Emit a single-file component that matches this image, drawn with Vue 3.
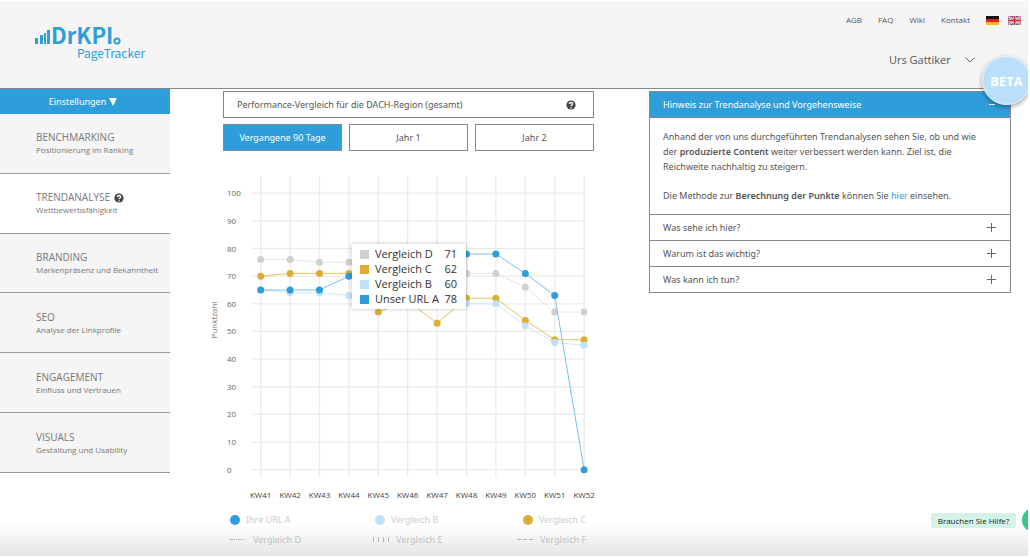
<script setup>
import { ref } from 'vue'

const metaLinks = ['AGB', 'FAQ', 'Wiki', 'Kontakt']

const navItems = [
  { title: 'BENCHMARKING', sub: 'Positionierung im Ranking' },
  { title: 'TRENDANALYSE', sub: 'Wettbewerbsfähigkeit', active: true },
  { title: 'BRANDING', sub: 'Markenpräsenz und Bekanntheit' },
  { title: 'SEO', sub: 'Analyse der Linkprofile' },
  { title: 'ENGAGEMENT', sub: 'Einfluss und Vertrauen' },
  { title: 'VISUALS', sub: 'Gestaltung und Usability' }
]

const ranges = ['Vergangene 90 Tage', 'Jahr 1', 'Jahr 2']
const activeRange = ref(0)

const questions = ['Was sehe ich hier?', 'Warum ist das wichtig?', 'Was kann ich tun?']

const weeks = Array.from({ length: 12 }, (_, i) => 'KW' + (41 + i))
const ticks = Array.from({ length: 11 }, (_, i) => i * 10)
const px = (i) => 37.7 + i * 29.4
const py = (v) => 304.7 - v * 2.765

const series = [
  { key: 'd', values: [76, 76, 75, 75, 74, 73, 72, 71, 71, 66, 57, 57] },
  { key: 'c', values: [70, 71, 71, 71, 57, 61, 53, 62, 62, 54, 47, 47] },
  { key: 'b', values: [65, 64, 64, 63, 62, 61, 60, 60, 60, 52, 46, 45] },
  { key: 'a', values: [65, 65, 65, 70, 72, 74, 76, 78, 78, 71, 63, 0] }
].map((s) => ({ ...s, path: s.values.map((v, i) => px(i) + ',' + py(v)).join(' ') }))

const tooltip = [
  { key: 'd', name: 'Vergleich D', value: 71 },
  { key: 'c', name: 'Vergleich C', value: 62 },
  { key: 'b', name: 'Vergleich B', value: 60 },
  { key: 'a', name: 'Unser URL A', value: 78 }
]
</script>

<template>
  <div class="page">
    <header class="header">
      <a class="logo" href="#" aria-label="DrKPI PageTracker">
        <span class="logo-top">
          <svg class="bars" viewBox="0 0 16 14" aria-hidden="true">
            <path d="M0 8h3v6H0zM5 5h3v9H5zM9 3h2v11H9zM12 0h3v14h-3z" />
          </svg>
          <span class="brand">DrKPI</span>
          <svg class="ring" viewBox="0 0 8 8" aria-hidden="true"><circle cx="4" cy="4" r="2.6" /></svg>
        </span>
        <span class="product">PageTracker</span>
      </a>
      <div class="header-right">
        <nav class="meta">
          <a v-for="l in metaLinks" :key="l" href="#">{{ l }}</a>
          <a class="flag de" href="#" aria-label="Deutsch">
            <svg viewBox="0 0 13 9"><path fill="#111" d="M0 0h13v3H0z" /><path fill="#d8222a" d="M0 3h13v3H0z" /><path fill="#f3b91f" d="M0 6h13v3H0z" /></svg>
          </a>
          <a class="flag" href="#" aria-label="English">
            <svg viewBox="0 0 13 9">
              <path fill="#35497f" d="M0 0h13v9H0z" />
              <path stroke="#fff" stroke-width="2" d="M0 0l13 9M13 0L0 9" />
              <path stroke="#d0303c" stroke-width=".8" d="M0 0l13 9M13 0L0 9" />
              <path stroke="#fff" stroke-width="3.4" d="M6.500 0v9M0 4.500h13" />
              <path stroke="#d0303c" stroke-width="2" d="M6.500 0v9M0 4.500h13" />
            </svg>
          </a>
        </nav>
        <button class="user" type="button">
          Urs Gattiker
          <svg class="chevron" viewBox="0 0 10 6" aria-hidden="true"><path d="M.5.5L5 5l4.500-4.500" /></svg>
        </button>
      </div>
      <span class="beta">BETA</span>
    </header>

    <div class="body">
      <aside class="sidebar">
        <button class="settings" type="button">
          Einstellungen
          <svg viewBox="0 0 8 8" aria-hidden="true"><path d="M0 0h8L4 8z" /></svg>
        </button>
        <nav class="nav">
          <a v-for="n in navItems" :key="n.title" href="#" class="nav-item" :class="{ active: n.active }">
            <span class="nav-title">
              {{ n.title }}
              <svg v-if="n.active" class="help" viewBox="0 0 10 10" aria-hidden="true">
                <circle cx="5" cy="5" r="4.6" /><path d="M3.400 4C3.400 2 6.700 2 6.700 4 6.700 5.100 5 5 5 6.300M5 7.200v1.200" />
              </svg>
            </span>
            <span class="nav-sub">{{ n.sub }}</span>
          </a>
        </nav>
      </aside>

      <main class="content">
        <section class="trend">
          <h1 class="box-title">
            Performance-Vergleich für die DACH-Region (gesamt)
            <svg class="help" viewBox="0 0 10 10" aria-hidden="true">
              <circle cx="5" cy="5" r="4.6" /><path d="M3.400 4C3.400 2 6.700 2 6.700 4 6.700 5.100 5 5 5 6.300M5 7.200v1.200" />
            </svg>
          </h1>
          <div class="ranges">
            <button v-for="(r, i) in ranges" :key="r" type="button" :class="{ on: i === activeRange }" @click="activeRange = i">{{ r }}</button>
          </div>
          <div class="chart">
            <svg class="plot" viewBox="0 0 371 338" role="img" aria-label="Punktzahl pro Kalenderwoche">
              <g class="grid">
                <path v-for="(w, i) in weeks" :key="w" :d="`M${px(i)} 11V312`" />
                <path v-for="t in ticks" :key="t" :d="`M29 ${py(t)}H361`" />
              </g>
              <g class="axis">
                <text v-for="t in ticks" :key="t" x="4" :y="py(t) + 3">{{ t }}</text>
              </g>
              <text class="axis-name" text-anchor="middle" transform="translate(-6 155) rotate(-90)">Punktzahl</text>
              <g class="weeks">
                <text v-for="(w, i) in weeks" :key="w" :x="px(i)" y="333" text-anchor="middle">{{ w }}</text>
              </g>
              <g v-for="s in series" :key="s.key" :class="'s-' + s.key">
                <polyline :points="s.path" />
                <circle v-for="(v, i) in s.values" :key="i" :cx="px(i)" :cy="py(v)" r="3.5" />
              </g>
            </svg>
            <table class="tooltip">
              <tbody>
                <tr v-for="t in tooltip" :key="t.key">
                  <th scope="row"><i :class="'bg-' + t.key"></i>{{ t.name }}</th>
                  <td>{{ t.value }}</td>
                </tr>
              </tbody>
            </table>
          </div>
          <ul class="legend">
            <li><i class="dot bg-a"></i>Ihre URL A</li>
            <li><i class="dot bg-b"></i>Vergleich B</li>
            <li><i class="dot bg-c"></i>Vergleich C</li>
          </ul>
          <ul class="legend dashed">
            <li><svg class="dash" viewBox="0 0 16 5"><path stroke-dasharray="3 1 1 1 1 1" d="M0 2.500h16" /></svg>Vergleich D</li>
            <li><svg class="dash" viewBox="0 0 16 5"><path stroke-width="5" stroke-dasharray="1 4" d="M0 2.500h16" /></svg>Vergleich E</li>
            <li><svg class="dash" viewBox="0 0 16 5"><path stroke-dasharray="4 2" d="M0 2.500h16" /></svg>Vergleich F</li>
          </ul>
        </section>

        <section class="info">
          <button class="info-head" type="button" aria-expanded="true">Hinweis zur Trendanalyse und Vorgehensweise<span class="minus"></span></button>
          <div class="info-text">
            <p>Anhand der von uns durchgeführten Trendanalysen sehen Sie, ob und wie der <b>produzierte Content</b> weiter verbessert werden kann. Ziel ist, die Reichweite nachhaltig zu steigern.</p>
            <p>Die Methode zur <b>Berechnung der Punkte</b> können Sie <a href="#">hier</a> einsehen.</p>
          </div>
          <button v-for="q in questions" :key="q" class="question" type="button" aria-expanded="false">
            {{ q }}
            <svg viewBox="0 0 9 9" aria-hidden="true"><path d="M4.500 0v9M0 4.500h9" /></svg>
          </button>
        </section>
      </main>
    </div>

    <div class="fade"></div>
    <button class="chat-label" type="button">Brauchen Sie Hilfe?</button>
    <span class="chat-dot"></span>
  </div>
</template>

<style>
body {
  background: #fff;
}
</style>

<style scoped>
* {
  box-sizing: border-box;
}
.page {
  position: relative;
  margin: 1px 2px 2px 0;
  height: calc(100vh - 3px);
  overflow: hidden;
  background: #fff;
  color: #555;
  font: 10px/15px "Open Sans", "Noto Sans", sans-serif;
}
button {
  border: 0;
  background: none;
  padding: 0;
  color: inherit;
  font: inherit;
  cursor: pointer;
}
a {
  color: inherit;
  text-decoration: none;
}
p, h1, ul {
  margin: 0;
  padding: 0;
  list-style: none;
}
svg {
  display: block;
  flex: none;
}
.header {
  position: relative;
  z-index: 2;
  display: flex;
  justify-content: space-between;
  height: 88px;
  padding: 12px 7px 0 35px;
  background: #f5f5f5;
  border-bottom: 1px solid #888;
}
.logo {
  color: #2f9dda;
  font-family: "Noto Sans CJK JP", sans-serif;
  padding-top: 11px;
}
.logo-top {
  display: flex;
  align-items: flex-end;
  height: 22px;
}
.bars {
  width: 16px;
  height: 14px;
  margin-bottom: 2px;
  fill: #2f9dda;
}
.brand {
  font-size: 22px;
  line-height: 24px;
  font-weight: 700;
}
.ring {
  width: 8px;
  height: 8px;
  margin-bottom: 1px;
  fill: none;
  stroke: #2f9dda;
  stroke-width: 2;
}
.product {
  display: block;
  padding-left: 42px;
  font-size: 12px;
  line-height: 14px;
}
.header-right {
  display: flex;
  flex-direction: column;
}
.meta {
  display: flex;
  align-items: center;
  gap: 16px;
  font-size: 8px;
  line-height: 14px;
}
.flag {
  width: 13px;
  margin-left: -7px;
}
.flag.de {
  margin-left: 0;
}
.flag svg {
  width: 13px;
  height: 9px;
}
.user {
  display: flex;
  align-items: center;
  gap: 14px;
  margin: 24px 0 0 43px;
  font-size: 11px;
  line-height: 18px;
}
.chevron {
  width: 10px;
  height: 6px;
  fill: none;
  stroke: #666;
}
.beta {
  position: absolute;
  right: -3px;
  top: 55px;
  width: 49px;
  height: 49px;
  border: 1px solid #eaf5fd;
  border-radius: 50%;
  background: #badffb;
  box-shadow: 0 2px 5px rgba(0, 0, 0, .35);
  color: #fff;
  font-size: 13px;
  font-weight: 700;
  line-height: 48px;
  text-align: center;
}
.body {
  display: flex;
}
.sidebar {
  width: 170px;
  flex: none;
}
.settings {
  display: flex;
  align-items: center;
  justify-content: center;
  gap: 3px;
  width: 100%;
  height: 25px;
  padding-right: 4px;
  background: #2f9dda;
  color: #fff;
  font: 9px/15px "Noto Sans", sans-serif;
}
.settings svg {
  width: 8px;
  height: 8px;
  fill: #fff;
}
.nav {
  display: grid;
  grid-auto-rows: 1fr;
  height: 359px;
}
.nav-item {
  display: flex;
  flex-direction: column;
  justify-content: center;
  padding-left: 36px;
  background: #f5f5f5;
  border-bottom: 1px solid #999;
  color: #777;
}
.nav-item.active {
  background: #fff;
}
.nav-title {
  display: flex;
  align-items: center;
  gap: 4px;
  line-height: 13px;
}
.nav-sub {
  font-size: 8px;
  line-height: 11px;
}
.help {
  width: 10px;
  height: 10px;
  fill: #444;
}
.help path {
  fill: none;
  stroke: #fff;
  stroke-width: 1.3;
}
.content {
  flex: 1;
  display: grid;
  grid-template-columns: 371fr 362fr;
  align-items: start;
  gap: 55px;
  padding: 2px 17px 0 53px;
  font: 9px/15px "Noto Sans", sans-serif;
}
.box-title {
  display: flex;
  align-items: center;
  justify-content: space-between;
  height: 27px;
  padding: 0 17px 0 13px;
  border: 1px solid #888;
  font-size: 9px;
  font-weight: 400;
}
.ranges {
  display: grid;
  grid-template-columns: repeat(3, 1fr);
  gap: 7px;
  margin-top: 6px;
}
.ranges button {
  height: 27px;
  border: 1px solid #888;
}
.ranges .on {
  background: #2f9dda;
  color: #fff;
}
.chart {
  position: relative;
  margin-top: 14px;
  font-family: "Open Sans", sans-serif;
}
.plot {
  width: 100%;
  overflow: visible;
}
.grid path {
  stroke: #ebebeb;
  stroke-width: 1.3;
}
.axis {
  font-size: 8px;
  fill: #666;
}
.axis-name {
  font-size: 8px;
  fill: #777;
}
.weeks {
  font-size: 8px;
  fill: #444;
}
.plot polyline {
  fill: none;
  stroke-width: 1;
}
.s-a polyline { stroke: #7dc0ea; }
.s-a circle { fill: #2f9dda; }
.s-b polyline { stroke: #cfe9f8; }
.s-b circle { fill: #c0e2f7; }
.s-c polyline { stroke: #e6c263; }
.s-c circle { fill: #dcae35; }
.s-d polyline { stroke: #ddd; stroke-dasharray: 2 1; }
.s-d circle { fill: #d0d0d0; }
.bg-a { background: #2f9dda; }
.bg-b { background: #c0e2f7; }
.bg-c { background: #dcae35; }
.bg-d { background: #d0d0d0; }
.tooltip {
  position: absolute;
  left: 129px;
  top: 79px;
  width: 114px;
  height: 65px;
  padding: 2px 9px 3px 8px;
  border-spacing: 0;
  background: #fff;
  box-shadow: 0 0 4px rgba(0, 0, 0, .25);
  color: #333;
  font-size: 11px;
  white-space: nowrap;
}
.tooltip th,
.tooltip td {
  height: 15px;
  padding: 0;
  font-weight: 500;
  line-height: 15px;
  text-align: left;
}
.tooltip td {
  text-align: right;
}
.tooltip i {
  display: inline-block;
  width: 9px;
  height: 9px;
  margin-right: 6px;
  vertical-align: -1px;
}
.legend {
  display: grid;
  grid-template-columns: 145px 148px 1fr;
  padding: 9px 0 0 7px;
  color: #ccc;
}
.legend.dashed {
  grid-template-columns: 143px 144px 1fr;
  padding-top: 5px;
}
.legend li {
  display: flex;
  align-items: center;
}
.dot {
  width: 10px;
  height: 10px;
  margin-right: 6px;
  border-radius: 50%;
}
.dash {
  width: 16px;
  height: 5px;
  margin-right: 7px;
  fill: none;
  stroke: #bbb;
}
.info {
  border: 1px solid #888;
}
.info-head {
  display: flex;
  align-items: center;
  justify-content: space-between;
  width: 100%;
  height: 26px;
  padding: 0 15px 0 13px;
  background: #2f9dda;
  border-bottom: 1px solid #888;
  color: #fff;
}
.minus {
  width: 6px;
  height: 1px;
  background: #fff;
}
.info-text {
  display: grid;
  gap: 14px;
  padding: 11px 22px 11px 13px;
}
.info-text b {
  font-weight: 600;
}
.info-text a {
  color: #2f9dda;
}
.question {
  display: flex;
  align-items: center;
  justify-content: space-between;
  width: 100%;
  height: 26px;
  padding: 0 14px 0 13px;
  border-top: 1px solid #888;
}
.question svg {
  width: 9px;
  height: 9px;
  fill: none;
  stroke: #666;
}
.fade {
  position: absolute;
  left: 0;
  right: 0;
  bottom: 0;
  height: 32px;
  background: linear-gradient(rgba(0, 0, 0, 0), rgba(0, 0, 0, .1));
}
.chat-label {
  position: absolute;
  right: 12px;
  bottom: 28px;
  width: 85px;
  height: 15px;
  border-radius: 2px;
  background: #d5f2e6;
  color: #222;
  font-size: 8px;
}
.chat-dot {
  position: absolute;
  right: -18px;
  bottom: 24px;
  width: 24px;
  height: 24px;
  border-radius: 50%;
  background: #35c88a;
}
</style>
